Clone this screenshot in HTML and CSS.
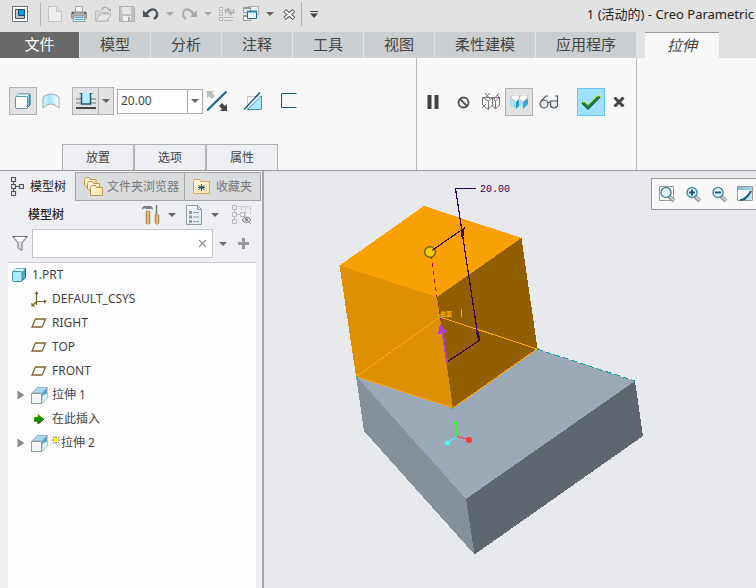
FILE: index.html
```html
<!DOCTYPE html>
<html lang="zh-CN">
<head>
<meta charset="utf-8">
<title>1 (活动的) - Creo Parametric</title>
<link rel="stylesheet" href="styles.css">
</head>
<body>
<svg class="defs" width="0" height="0" aria-hidden="true">
  <defs>
    <linearGradient id="sheet" x1="0" y1="0" x2="1" y2="1"><stop offset="0" stop-color="#fff"/><stop offset="1" stop-color="#cfe6f2"/></linearGradient>
    <linearGradient id="wood" x1="0" x2="1"><stop offset="0" stop-color="#a67a35"/><stop offset=".5" stop-color="#f6cf8b"/><stop offset="1" stop-color="#a67a35"/></linearGradient>
    <linearGradient id="folder" x1="0" y1="0" x2="1" y2="1"><stop offset="0" stop-color="#fffbe8"/><stop offset="1" stop-color="#fbdf9e"/></linearGradient>
    <linearGradient id="sky" x1="0" y1="0" x2="1" y2="1"><stop offset="0" stop-color="#6fb4cf"/><stop offset="1" stop-color="#d4f0fb"/></linearGradient>
    <linearGradient id="arc" x1="0" x2="1"><stop offset="0" stop-color="#d8f5ff"/><stop offset=".4" stop-color="#a4e6ff"/><stop offset="1" stop-color="#fff"/></linearGradient>
    <symbol id="caret" viewBox="0 0 8 4"><path d="M0 0h8L4 4z" fill="currentColor"/></symbol>
    <symbol id="plane" viewBox="0 0 16 10"><path d="M4.500 1H14.500L11 9H1z" fill="none" stroke="#806530" stroke-width="1.300"/></symbol>
    <symbol id="extrude" viewBox="0 0 17 17"><path d="M1 6 6 .5h10.500L11 6z" fill="#a9d8e8" stroke="#8aa5b0" stroke-width=".8"/><path d="M11 6 16.500.5v6L11 9z" fill="#5da5c4"/><path d="M11 9l5.500-3v5L11 16.500z" fill="#d4f0fa" stroke="#8fb6c4" stroke-width=".6"/><path d="M.5 6.500h10v10H.5z" fill="#f6f6f6" stroke="#999"/></symbol>
    <symbol id="lens" viewBox="0 0 18 18"><path d="M11 11.500l5 4.500" stroke="#999" stroke-width="4"/><path d="M12 12l4 3.500" stroke="#ddd" stroke-width="1.500"/><circle cx="8" cy="7.500" r="5" fill="#e9f6fb" stroke="#4c8da5" stroke-width="1.500"/></symbol>
  </defs>
</svg>
<div class="app">
  <header class="titlebar">
    <div class="quick" role="toolbar">
      <button class="tool app-button" aria-label="窗口"><svg width="16" height="16"><path d="M.5.5h15v15H.5z" fill="#fff" stroke="#687078"/><path d="M3.500 3.500h9v9h-9z" fill="#bfc5ca" stroke="#4a5056"/><path d="M6.500 3.500h6v6h-6z" fill="#00a0e0" stroke="#174f75"/></svg></button>
      <span class="rule"></span>
      <button class="tool" aria-label="新建"><svg width="14" height="16"><path d="M.5.5h8l5 5v10H.5z" fill="#eee" stroke="#c4c4c4"/><path d="M8.500.5v5h5" fill="#ddd" stroke="#c4c4c4"/></svg></button>
      <button class="tool" aria-label="打印"><svg width="16" height="16"><path d="M4.500.5h7v6h-7z" fill="#f6f6f6" stroke="#aaa"/><path d="M1 6h14l1 6H0z" fill="#aaa" stroke="#888"/><path d="M1 7h2m10 0h2" stroke="#333"/><path d="M3 10h10l1 5.500H2z" fill="#e9f5fa" stroke="#999"/><path d="M4 11.500h8m-8.500 2h9" stroke="#35a7d5"/></svg></button>
      <button class="tool" aria-label="打开"><svg width="17" height="16"><path d="M.5 15V5h5l1 1.500h7V15z" fill="#d7d7d7" stroke="#bbb"/><path d="M1 15l4-7h11l-4 7z" fill="#e5e5e5" stroke="#b4b4b4"/><path d="M7 4c1-4 6-3 7 0" fill="none" stroke="#aaa" stroke-width="1.500"/><path d="M12 3h4v3z" fill="#aaa"/></svg></button>
      <button class="tool" aria-label="保存"><svg width="16" height="16"><path d="M.5.5h14l1 1v14H.5z" fill="#c1c1c1" stroke="#b0b0b0"/><path d="M3 1h9v7H3z" fill="#e6e6e6"/><path d="M4 10h8v5H4z" fill="#eee"/><path d="M9 11h2v4H9z" fill="#aaa"/></svg></button>
      <button class="tool" aria-label="撤消"><svg width="16" height="14"><path d="M3 8C6 2 11 1 13 4s1 6-2 8" fill="none" stroke="#4b5256" stroke-width="2.200"/><path d="M0 3v7h7z" fill="#4b5256"/></svg></button>
      <button class="tool drop muted" aria-label="撤消列表"><svg width="8" height="4"><use href="#caret"/></svg></button>
      <button class="tool" aria-label="重做"><svg width="16" height="14"><path d="M13 8C10 2 5 1 3 4S2 10 5 12" fill="none" stroke="#aaa" stroke-width="2.200"/><path d="M16 3v7H9z" fill="#aaa"/></svg></button>
      <button class="tool drop muted" aria-label="重做列表"><svg width="8" height="4"><use href="#caret"/></svg></button>
      <button class="tool" aria-label="重新生成"><svg width="16" height="16"><path d="M.5 1.500h3v3h-3zM.5 6.500h3v3h-3zM.5 11.500h3v3h-3z" fill="#eee" stroke="#b5b5b5"/><path d="M5 11.500h9m-9 3h9" stroke="#b5b5b5"/><path d="M6.500 7V4H9M14.500 3v4H12" fill="none" stroke="#aaa" stroke-width="1.500"/><path d="M8.500 1v6l3-3zM12.500 4v6l-3-3z" fill="#aaa"/></svg></button>
      <button class="tool" aria-label="窗口列表"><svg width="16" height="16"><path d="M5.500.5h10v8h-10z" fill="#eee" stroke="#aaa"/><path d="M.5 1.500h7v5h-7zM.5 9.500h7v5h-7z" fill="#f5f5f5" stroke="#999"/><path d="M1 2h6M1 10h6" stroke="#999" stroke-width="2"/><path d="M4.500 5.500h9v7h-9z" fill="#dff3fc" stroke="#2c6280"/><path d="M4 5.500h10" stroke="#2585ad" stroke-width="2"/></svg></button>
      <button class="tool drop" aria-label="更多窗口"><svg width="8" height="4"><use href="#caret"/></svg></button>
      <button class="tool" aria-label="关闭"><svg width="13" height="11"><path d="M1.500 1.500l9.500 8m0-8-9.500 8" stroke="#555" stroke-width="4"/><path d="M2 2l8.500 7m0-7L2 9" stroke="#fff" stroke-width="2"/></svg></button>
      <span class="rule tight"></span>
      <button class="tool wide" aria-label="自定义"><svg width="8" height="7"><path d="M0 .5h8" stroke="#444"/><path d="M0 2.500h8L4 7z" fill="#444"/></svg></button>
    </div>
    <h1 class="title">1 (活动的) - Creo Parametric</h1>
  </header>

  <nav class="tabs">
    <button class="tab file">文件</button>
    <button class="tab">模型</button>
    <button class="tab">分析</button>
    <button class="tab">注释</button>
    <button class="tab">工具</button>
    <button class="tab">视图</button>
    <button class="tab long">柔性建模</button>
    <button class="tab long">应用程序</button>
    <button class="tab active">拉伸</button>
  </nav>

  <section class="ribbon">
    <div class="group options">
      <div class="controls">
        <button class="btn on" aria-label="实体"><svg width="16" height="16"><path d="M1 4l3-3h11v11l-3 3" fill="#6fc4e3" stroke="#15577a"/><path d="M1 3.500 3 1h12l-3 3z" fill="#eafaff" stroke="#83aebe"/><rect x=".5" y="3.500" width="12" height="12" rx="1" fill="#fff" stroke="#5a93ab"/></svg></button>
        <button class="btn" aria-label="曲面"><svg width="18" height="16"><path d="M1 4Q9-2 17 4v11Q9 7 1 15z" fill="url(#arc)" stroke="#a2a8ab"/></svg></button>
        <div class="split">
          <button class="split-main" aria-label="深度"><svg width="20" height="16"><path d="M0 6h5m10 0h5M0 10h5m10 0h5" stroke="#999" stroke-width="1.500"/><path d="M6 0h8v11H6z" fill="#b9ecff"/><path d="M3.500 0h2v11h9V0h2" fill="none" stroke="#16597b" stroke-width="1.500"/><path d="M0 15h20" stroke="#444" stroke-width="2"/></svg></button>
          <button class="split-drop" aria-label="深度选项"><svg width="8" height="4"><use href="#caret"/></svg></button>
        </div>
        <div class="combo">
          <input type="text" value="20.00" aria-label="深度值">
          <button aria-label="深度值列表"><svg width="8" height="4"><use href="#caret"/></svg></button>
        </div>
        <button class="btn" aria-label="反向"><svg width="20" height="20"><path d="M0 0h7L5 2l3 3-3 3-3-3-2 2z" fill="#bbb"/><path d="M0 19.500 19.500.5" stroke="#24698e" stroke-width="2.200"/><path d="M20 20h-7l2-2-3-3 3-3 3 3 2-2z" fill="#444"/></svg></button>
        <button class="btn spaced" aria-label="移除材料"><svg width="19" height="19"><path d="M3.500 17.500v-13h13" fill="none" stroke="#999" stroke-dasharray="1 1"/><path d="M17.500 4v13.500H3.500z" fill="#abebff" stroke="#4594b0"/><path d="M0 17.500 16 .5" stroke="#15577a" stroke-width="1.500"/></svg></button>
        <button class="btn spaced" aria-label="加厚草绘"><svg width="16" height="16"><path d="M15.500.5H.5v14h15" fill="none" stroke="#16597b"/></svg></button>
      </div>
      <div class="panels">
        <button>放置</button><button>选项</button><button>属性</button>
      </div>
    </div>
    <div class="group actions">
      <div class="controls">
        <button class="btn" aria-label="暂停"><svg width="12" height="14"><path d="M.5 0h4v14h-4zM7.500 0h4v14h-4z" fill="#444"/></svg></button>
        <button class="btn spaced-sm" aria-label="无预览"><svg width="13" height="13"><circle cx="6.500" cy="6.500" r="5" fill="none" stroke="#555" stroke-width="1.800"/><path d="M3 3l7 7" stroke="#555" stroke-width="1.800"/></svg></button>
        <button class="btn" aria-label="分离预览"><svg width="20" height="18"><path d="M1.500 4.500h10l-4 3.500zM1.500 5v7l6 4.500V8M7.500 16l4-4V5M11.500 4.500h7l-4 3.500zM14.500 8v8l4-4V5M14.500 16l-4-4M4 0l5 6M9 0 4 5M18 0l-5 6M1 15l4-4m11-9 3 3" fill="none" stroke="#777"/></svg></button>
        <button class="btn on" aria-label="连接预览"><svg width="18" height="14"><path d="M0 3l6 4v7L0 10z" fill="#9fe4f8"/><path d="M6 7l4-4v7l-4 4z" fill="#249bd1"/><path d="M9 3l4 4v7L9 10z" fill="#a7e6fa"/><path d="M13 7l5-4v6l-5 5z" fill="#31a9dc"/><path d="M0 2.500 3 0h5l2 3-4 4zM9 3l2-3h5l2 2.500L13 7z" fill="#fff" stroke="#aaa" stroke-width=".7"/></svg></button>
        <button class="btn spaced-sm" aria-label="校验"><svg width="20" height="14"><circle cx="5" cy="9" r="4" fill="#e4eaed" stroke="#50575c" stroke-width="1.200"/><path d="M11.500 6h7v5q-3.500 4-7 0z" fill="#e4eaed"/><path d="M11.500 6h7v5q-3.500 4-7 0zM9 8l2-1M2 6l5-5h2M16 1h2.500v5" fill="none" stroke="#50575c" stroke-width="1.200"/></svg></button>
        <button class="btn ok" aria-label="确定"><svg width="20" height="15"><path d="M0 7h4l3 3 9-9h4L7 14z" fill="#28884a" stroke="#d5e800" stroke-width=".8"/><path d="M1 8l6 6L19 2" fill="none" stroke="#176535" stroke-width="1.500"/></svg></button>
        <button class="btn" aria-label="取消"><svg width="12" height="10"><path d="M1.500.5l9 9m0-9-9 9" stroke="#444" stroke-width="3"/></svg></button>
      </div>
    </div>
  </section>

  <main class="work">
    <aside class="side">
      <div class="side-tabs">
        <button class="side-tab active"><svg width="13" height="19"><path d="M.5.5h4v4h-4zM.5 7.500h4v4h-4zM.5 14.500h4v4h-4zM8.500 7.500h4v4h-4zM2.500 5v2m0 5v2M5 9.500h3" fill="none" stroke="#555" stroke-width="1.200"/></svg><span>模型树</span></button>
        <button class="side-tab browser"><svg width="19" height="19"><g fill="url(#folder)" stroke="#bd944b"><path d="M.5 8V2.500L2 .5h3l1 2h6V10h-9z"/><path d="M3.500 12V6.500l1-2h4l1 2h6V14h-9z"/><path d="M6.500 17V10.500l1-2h4l1 2h6v8h-12z"/></g></svg><span>文件夹浏览器</span></button>
        <button class="side-tab fav"><svg width="17" height="15"><path d="M.5 14V2.500l1-2h5l1 2h9v12H.5z" fill="url(#folder)" stroke="#d1a660"/><path d="M8.500 5v7M5.500 6.500l6 4m0-4-6 4M5 8.500h7" stroke="#175776"/></svg><span>收藏夹</span></button>
      </div>
      <div class="tree-head">
        <h2>模型树</h2>
        <button class="tool" aria-label="设置"><svg width="18" height="20"><path d="M0 3q2-3 4-2h5q2 1 2 4-2-2-3-1H4Q2 2 0 5z" fill="#7c8285"/><path d="M4 6h4v13H4z" fill="url(#wood)" stroke="#a98345" stroke-width=".5"/><path d="M14.500 0v10" stroke="#777" stroke-width="1.500"/><path d="M13 10h4v8q-2 3-4 0z" fill="url(#wood)" stroke="#a98345" stroke-width=".5"/></svg></button>
        <button class="tool drop" aria-label="设置列表"><svg width="8" height="4"><use href="#caret"/></svg></button>
        <button class="tool show" aria-label="显示"><svg width="16" height="20"><path d="M.5.5h11l4 4v15H.5z" fill="url(#sheet)" stroke="#8f9b9f"/><path d="M11.500.5v4h4" fill="none" stroke="#8f9b9f"/><path d="M3 6h3v3H3zm0 4.500h3v3H3zm0 4.500h3v3H3z" fill="#999"/><path d="M7 7.500h6m-6 4.500h6m-6 4.500h6" stroke="#999"/></svg></button>
        <button class="tool drop" aria-label="显示列表"><svg width="8" height="4"><use href="#caret"/></svg></button>
        <button class="tool eye" aria-label="隐藏"><svg width="20" height="20"><path d="M.5.5h4v4h-4zM.5 7.500h4v4h-4zM.5 14.500h4v4h-4zM2.500 5v2m0 5v2M5 9.500h4M8.500 7.500h4v4h-4z" fill="none" stroke="#bbb"/><path d="M6 1.500h13M9.500 2v4m4-4v9m5-9v7" fill="none" stroke="#c5c5c5" stroke-dasharray="3 1"/><path d="M10 15q5-6 9 0-5 5-9 0zM11 11l8 8" fill="#ddd" stroke="#888"/><circle cx="14.500" cy="14.500" r="1.500" fill="#888"/></svg></button>
      </div>
      <div class="filter">
        <svg class="funnel" width="16" height="15"><path d="M.5.5h15L10 7v7.500L6 12V7z" fill="#ddd" stroke="#777"/><path d="M3 1h10L9 5H7z" fill="#fff"/></svg>
        <div class="search">
          <input type="text" aria-label="过滤器">
          <button aria-label="清除"><svg width="9" height="9"><path d="M1 1l7 7m0-7-7 7" stroke="#999" stroke-width="1.300"/></svg></button>
        </div>
        <button class="tool drop" aria-label="过滤选项"><svg width="8" height="4"><use href="#caret"/></svg></button>
        <button class="tool add" aria-label="添加"><svg width="11" height="11"><path d="M5.500 0v11M0 5.500h11" stroke="#999" stroke-width="3"/></svg></button>
      </div>
      <ul class="tree">
        <li class="root"><svg width="14" height="14"><path d="M.5 4 4 .5h9.500v9L10 13" fill="#48a9cd" stroke="#1f6f92"/><path d="M.5 4 4 .5h9L10 4z" fill="#dcf8ff"/><rect x=".5" y="3.500" width="9.500" height="10" rx="1" fill="#abe9fb" stroke="#4095b5"/></svg>1.PRT</li>
        <li><span class="twist"></span><span class="icon"><svg width="16" height="16"><path d="M5.500 14V1M4 3l1.500-2L7 3M5 10.500h10M13 9l2 1.500-2 1.500M6 10l-5 5m0-3v3h3" fill="none" stroke="#806530" stroke-width="1.200"/></svg></span>DEFAULT_CSYS</li>
        <li><span class="twist"></span><span class="icon"><svg width="16" height="10"><use href="#plane"/></svg></span>RIGHT</li>
        <li><span class="twist"></span><span class="icon"><svg width="16" height="10"><use href="#plane"/></svg></span>TOP</li>
        <li><span class="twist"></span><span class="icon"><svg width="16" height="10"><use href="#plane"/></svg></span>FRONT</li>
        <li><button class="twist" aria-label="展开"><svg width="8" height="10"><path d="M.5.500 7.500 5l-7 4.500z" fill="#8b8b8b"/></svg></button><span class="icon"><svg width="17" height="17"><use href="#extrude"/></svg></span>拉伸 1</li>
        <li><span class="twist"></span><span class="icon"><svg width="12" height="12"><path d="M1 4h4V1l6 5-6 5V8H1z" fill="#079000" stroke="#d9df00" stroke-width=".5"/><path d="M1 8h4v3l6-5" fill="none" stroke="#075000"/></svg></span>在此插入</li>
        <li><button class="twist" aria-label="展开"><svg width="8" height="10"><path d="M.5.500 7.500 5l-7 4.500z" fill="#8b8b8b"/></svg></button><span class="icon"><svg width="17" height="17"><use href="#extrude"/></svg></span><svg class="spark" width="8" height="8"><path d="M4 0v8M0 4h8M.5.500l7 7m0-7-7 7" stroke="#666"/><path d="M2 2h4v4H2z" fill="#fff600"/></svg>拉伸 2</li>
      </ul>
    </aside>

    <section class="viewport">
      <svg class="model" width="492" height="417" viewBox="264 171 492 417" role="img" aria-label="三维模型">
        <g shape-rendering="crispEdges">
          <path d="M356 376 537 349 635 381 466 499z" fill="#9ca9b8"/>
          <path d="M356 376 466 499 474.500 554.500 364 431z" fill="#84919b"/>
          <path d="M466 499 635 381 643 436 474.500 554.500z" fill="#5e6670"/>
          <path d="M424 206 521.500 238 437 297 339.500 265.500z" fill="#f9a100"/>
          <path d="M339.500 265.500 437 297 453 408 356 376.500z" fill="#dd9000"/>
          <path d="M437 297 521.500 238 537.500 349 453 408z" fill="#925f00"/>
          <path d="M356.500 376.500 440 317 537 349 453 408z" fill="none" stroke="#ffa500"/>
          <path d="M537 349 635 381" fill="none" stroke="#16a0a0" stroke-dasharray="6 3"/>
          <path d="M431 255 434 276 437 297 441 320" fill="none" stroke="#b00d4b" stroke-dasharray="4 4"/>
          <path d="M476 188.500H455.500L478.500 340M432 250.500l33-23M447 362l33-22" fill="none" stroke="#320060" stroke-width="1.200"/>
          <path d="M460.500 229h3l1 7-3 1zM476 332h3l1 8h-2z" fill="#320060"/>
          <path d="M447 362 442 327" stroke="#b33ed0" stroke-width="2"/><path d="M440 324l7 8-3 1-6 1z" fill="#b33ed0"/>
          <path d="M439 316h2v2h-2zM355.500 375.500h2v2h-2zM452 407h2v2h-2zM536.500 348h2v2h-2z" fill="#30b5b5"/>
          <path d="M461.500 309v8" stroke="#ffa500"/>
          <path d="M457 436.500 455.500 424" stroke="#35f535" stroke-width="1.500"/>
          <path d="M457 436.500l12 3" stroke="#f33"/><path d="M457 436.500l-10 6.500" stroke="#3ff"/>
        </g>
        <text class="face" x="440" y="316">曲面</text>
        <circle cx="430" cy="252" r="5.300" fill="#f9cc00" stroke="#6c6530" stroke-width="1.500"/>
        <path d="M432 250.500l5-3.500" stroke="#320060"/>
        <circle cx="455.500" cy="423" r="2" fill="#3f3"/><circle cx="469" cy="440" r="3" fill="#f33"/><circle cx="447.500" cy="443" r="2.600" fill="#3ff"/>
        <text class="dim" x="480" y="192">20.00</text>
      </svg>
      <div class="view-tools" role="toolbar">
        <button aria-label="重新调整"><svg width="18" height="18"><path d="M1.500 1.500h14v14h-14z" fill="#fff" stroke="#999"/><use href="#lens"/></svg></button>
        <button aria-label="放大"><svg width="18" height="18"><use href="#lens"/><path d="M8 4.500v6M5 7.500h6" stroke="#165a80" stroke-width="2"/></svg></button>
        <button aria-label="缩小"><svg width="18" height="18"><use href="#lens"/><path d="M5 7.500h6" stroke="#165a80" stroke-width="2"/></svg></button>
        <button aria-label="重画"><svg width="18" height="18"><path d="M1.500 1.500h15v14h-15z" fill="url(#sky)" stroke="#999"/><path d="M2 5l13 0v4L5 15H2z" fill="#fff"/><path d="M4 15q6 0 11-9M8 15l2-3" fill="none" stroke="#175c7e" stroke-width="2"/></svg></button>
      </div>
    </section>
  </main>
</div>
</body>
</html>
```

FILE: styles.css
```css
* { box-sizing: border-box; }
body, h1, h2, ul { margin: 0; padding: 0; }
body {
  font: 12px/16px "Noto Sans", "Noto Sans CJK SC", sans-serif;
  color: #444;
  background: #e8e9ed;
  overflow: hidden;
}
button, input { font: inherit; color: inherit; border: 0; background: none; padding: 0; margin: 0; border-radius: 0; min-width: 0; }
svg { display: block; flex: none; }
.defs { position: absolute; }
.app { display: flex; flex-direction: column; min-height: 100vh; }

.titlebar { display: flex; justify-content: space-between; align-items: center; height: 28px; padding: 0 2px 0 8px; background: #e2e2e2; }
.quick { display: flex; align-items: center; }
.tool { display: flex; align-items: center; justify-content: center; width: 24px; height: 24px; }
.tool.drop { width: 14px; color: #666; }
.tool.muted { color: #aaa; }
.tool.wide { width: 22px; }
.rule { width: 1px; height: 24px; margin: 0 2px 0 8px; background: #b5b5b5; }
.rule.tight { margin: 0 1px 0 0; }
.title { font-size: 13px; font-weight: 400; color: #222; white-space: nowrap; }

.tabs { display: flex; gap: 1px; height: 30px; padding-top: 4px; background: #e2e2e2; }
.tab { width: 70px; height: 26px; padding-bottom: 2px; font-size: 15px; line-height: 22px; background: #cbcfd2; color: #444; }
.tab.file { width: 79px; background: #696969; color: #fff; }
.tab.long { width: 100px; }
.tab.active { width: 74px; margin-left: 8px; background: #f8f8f8; border-top: 1px solid #999; font-style: italic; }

.ribbon { display: flex; height: 113px; background: #f8f8f8; border-bottom: 1px solid #999; }
.group { display: flex; flex-direction: column; justify-content: space-between; border-right: 1px solid #bbb; }
.options { width: 417px; padding: 29px 0 0 9px; }
.actions { width: 220px; padding: 30px 0 0 2px; }
.controls { display: flex; align-items: center; }
.btn { display: flex; align-items: center; justify-content: center; width: 28px; height: 28px; }
.btn.on { background: #e1e2e4; border: 1px solid #b0b0b0; }
.btn.ok { margin-left: 14px; background: #a0dfff; border: 1px solid #66c6fa; }
.btn.spaced { margin-left: 8px; }
.btn.spaced-sm { margin-left: 2px; }
.split { display: flex; width: 42px; height: 28px; margin: 0 3px 0 7px; background: #e1e2e4; border: 1px solid #b0b0b0; }
.split button { display: flex; align-items: center; justify-content: center; color: #666; }
.split-main { flex: 1; }
.split .split-drop { width: 15px; border-left: 1px solid #b0b0b0; }
.combo { display: flex; width: 86px; height: 25px; background: #fff; border: 1px solid #aaa; }
.combo input { flex: 1; padding: 0 3px; outline: 0; }
.combo button { display: flex; align-items: center; justify-content: center; width: 15px; border-left: 1px solid #aaa; color: #666; }
.panels { display: flex; margin-left: 53px; }
.panels button { width: 72px; height: 26px; background: #eeeff2; border: 1px solid #b0b0b0; border-bottom: 0; }

.work { display: flex; flex: 1; }
.side { display: flex; flex-direction: column; width: 264px; padding-top: 1px; background: #eeeff2; border-right: 2px solid #a5a5a5; }
.side-tabs { display: flex; padding-right: 1px; }
.side-tab { display: flex; align-items: center; gap: 4px; height: 29px; padding: 0 8px; background: #dadcde; border: 1px solid #a5a5a5; border-left-width: 0; color: #777; white-space: nowrap; }
.side-tab.active { width: 76px; padding-left: 11px; gap: 6px; background: none; border-width: 0 1px 0 0; color: #222; }
.side-tab.browser { width: 109px; padding-right: 0; }
.side-tab.fav { flex: 1; gap: 6px; }
.tree-head { display: flex; align-items: center; height: 28px; padding-left: 28px; }
.tree-head h2 { flex: 1; font-size: 12px; font-weight: 500; color: #222; }
.tree-head .drop { margin-left: 2px; }
.tree-head .show { margin-left: 3px; }
.tree-head .eye { margin: 0 8px; }
.filter { display: flex; align-items: center; height: 29px; padding-left: 12px; }
.funnel { margin-right: 4px; }
.search { display: flex; flex: 1; height: 29px; background: #fff; border: 1px solid #c3c6c9; }
.search input { flex: 1; padding: 0 4px; outline: 0; }
.search button { display: flex; align-items: center; justify-content: center; width: 20px; }
.filter .drop { margin-left: 3px; }
.filter .add { margin: 0 7px 0 2px; }
.filter .search { margin-right: 0; max-width: 181px; }
.tree { flex: 1; margin: 4px 6px 0 8px; background: #fdfdfd; border-top: 1px solid #ccc; list-style: none; }
.tree li { display: flex; align-items: center; height: 24px; white-space: pre; }
.tree .root { gap: 6px; padding-left: 4px; }
.twist { display: flex; align-items: center; justify-content: center; width: 22px; height: 24px; }
.tree button.twist { padding-left: 3px; }
.icon { display: flex; align-items: center; justify-content: center; width: 18px; margin-right: 4px; }
.spark { margin: 0 1px 6px 0; }

.viewport { position: relative; flex: 1; min-width: 0; overflow: hidden; background: #e8e9ed; }
.view-tools { position: absolute; top: 7px; left: 387px; display: flex; gap: 8px; padding: 6px; background: #f8f8f8; border: 1px solid #999; }
.dim { font: 10px "Liberation Mono", monospace; fill: #320060; }
.face { font: bold 6px "Noto Sans CJK SC", sans-serif; fill: #ffa500; }
```
